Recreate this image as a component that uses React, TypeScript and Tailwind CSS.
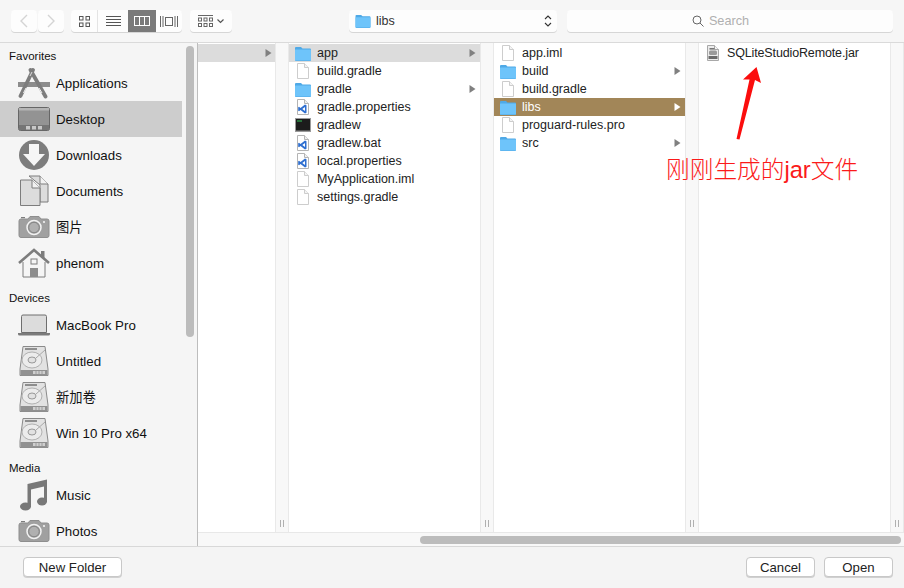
import React from "react";

const G = "#7d7d7d";

function Apps() {
  return (
    <svg width="32" height="32" viewBox="0 0 32 32">
      <rect x="0" y="15" width="32" height="5" fill="#8c8c8c" />
      <path d="M15 3 L2.5 29" stroke={G} strokeWidth="3.8" strokeLinecap="round" />
      <path d="M12.5 3 L27.5 29.5" stroke={G} strokeWidth="3.8" strokeLinecap="round" />
      <path d="M12 9 L14 5" stroke="#f5f5f5" strokeWidth="0.8" fill="none" />
      <path d="M21 21 L24 26" stroke="#f5f5f5" strokeWidth="1" />
      <path d="M8 21 L5.5 26" stroke="#f5f5f5" strokeWidth="1" />
    </svg>
  );
}
function DesktopI() {
  return (
    <svg width="32" height="32" viewBox="0 0 32 32">
      <rect x="0.5" y="4.5" width="31" height="23" rx="2" fill="#939393" stroke="#666" />
      <rect x="1" y="5" width="30" height="2.5" fill="#b5b5b5" />
      <rect x="1" y="22" width="30" height="5" fill="#757575" />
      <rect x="8" y="23" width="4" height="3.5" fill="#c8c8c8" />
      <rect x="14" y="23" width="4" height="3.5" fill="#c8c8c8" />
      <rect x="20" y="23" width="4" height="3.5" fill="#c8c8c8" />
    </svg>
  );
}
function DownloadsI() {
  return (
    <svg width="32" height="32" viewBox="0 0 32 32">
      <circle cx="16" cy="16" r="15" fill={G} />
      <path d="M11 5 H21 V15 H27 L16 27 L5 15 H11 Z" fill="#f6f6f6" />
    </svg>
  );
}
function DocsI() {
  return (
    <svg width="32" height="32" viewBox="0 0 32 32">
      <path d="M11 1 H22 L30 9 V27 H22 V10 Z" fill="#dcdcdc" stroke={G} />
      <path d="M22 1 V9 H30" fill="#f2f2f2" stroke={G} />
      <path d="M2.5 5 H14 L22 13 V30.5 H2.5 Z" fill="#dcdcdc" stroke={G} />
      <path d="M14 5 V13 H22" fill="#f2f2f2" stroke={G} />
    </svg>
  );
}
function CameraI() {
  return (
    <svg width="32" height="32" viewBox="0 0 32 32">
      <path d="M1 10 a2 2 0 0 1 2 -2 H10 L12 5.5 H21 L23 8 H29 a2 2 0 0 1 2 2 V24.5 a2 2 0 0 1 -2 2 H3 a2 2 0 0 1 -2 -2 Z" fill="#a0a0a0" stroke="#8e8e8e" />
      <rect x="3" y="6" width="4" height="1.2" fill={G} />
      <circle cx="16" cy="16.5" r="7" fill="#a0a0a0" stroke="#f2f2f2" strokeWidth="1.5" />
      <circle cx="16" cy="16.5" r="5.2" fill="#b0b0b0" stroke="#767676" strokeWidth="0.7" />
      <circle cx="26" cy="11" r="1.1" fill="#f2f2f2" />
    </svg>
  );
}
function HouseI() {
  return (
    <svg width="32" height="32" viewBox="0 0 32 32">
      <path d="M5 15 V30 H27 V15" fill="#f5f5f5" stroke={G} />
      <path d="M1 16 L16 3 L31 16" fill="none" stroke={G} strokeWidth="2.6" />
      <rect x="23" y="4" width="3.5" height="7" fill={G} />
      <rect x="13" y="12" width="6" height="5" fill="#f5f5f5" stroke={G} />
      <rect x="12" y="21" width="8" height="9" fill="#8c8c8c" />
    </svg>
  );
}
function LaptopI() {
  return (
    <svg width="32" height="32" viewBox="0 0 32 32">
      <path d="M3.5 7.5 a1.5 1.5 0 0 1 1.5 -1.5 H27 a1.5 1.5 0 0 1 1.5 1.5 V23.5 H3.5 Z" fill="#dcdcdc" stroke="#6e6e6e" />
      <path d="M0 24 H32 V25 a1.5 1.5 0 0 1 -1.5 1.5 H1.5 A1.5 1.5 0 0 1 0 25 Z" fill="#7a7a7a" />
    </svg>
  );
}
function HddI() {
  return (
    <svg width="32" height="32" viewBox="0 0 32 32">
      <path d="M5 1.5 H27 L30 24 V30.5 H2 V24 Z" fill="#e2e2e2" stroke="#8a8a8a" />
      <rect x="7" y="3" width="12" height="2" fill="#8e8e8e" />
      <ellipse cx="14" cy="15" rx="10" ry="8" fill="#ececec" stroke="#b0b0b0" />
      <ellipse cx="14" cy="15" rx="4" ry="3" fill="#e2e2e2" stroke="#999" />
      <path d="M27 5 L18 13" stroke="#a8a8a8" strokeWidth="1" />
      <rect x="2.5" y="25" width="27" height="5.5" fill="#919191" />
      <path d="M15 26 h12 v3 h-12 Z" fill="#cfcfcf" />
      <path d="M18 26 v3 M21 26 v3 M24 26 v3" stroke="#919191" strokeWidth="0.8" />
    </svg>
  );
}
function MusicI() {
  return (
    <svg width="32" height="32" viewBox="0 0 32 32">
      <path d="M9.5 5 L29 0.5 V23 H26 V7.5 L13 10.5 V28 H9.5 Z" fill="#787878" />
      <ellipse cx="7.5" cy="27.5" rx="5.5" ry="4" fill="#787878" />
      <ellipse cx="24" cy="22.5" rx="5" ry="4" fill="#787878" />
    </svg>
  );
}

function Folder({ w = 16, h = 15 }: { w?: number; h?: number }) {
  return (
    <svg width={w} height={h} viewBox="0 0 16 15">
      <path d="M0 2 a1 1 0 0 1 1 -1 H6 L7.5 2.5 H15 a1 1 0 0 1 1 1 V14 a1 1 0 0 1 -1 1 H1 a1 1 0 0 1 -1 -1 Z" fill="#4fa9e6" />
      <rect x="0" y="3.5" width="16" height="11" rx="0.5" fill="#6ec4fa" />
    </svg>
  );
}
function Doc() {
  return (
    <svg width="16" height="16" viewBox="0 0 16 16">
      <path d="M2.5 0.5 H9.5 L13.5 4.5 V15.5 H2.5 Z" fill="#fff" stroke="#cdcdcd" />
      <path d="M9.5 0.5 V4.5 H13.5" fill="#f4f4f4" stroke="#cdcdcd" />
    </svg>
  );
}
function CodeDoc() {
  return (
    <svg width="16" height="16" viewBox="0 0 16 16">
      <path d="M2.5 0.5 H9.5 L13.5 4.5 V15.5 H2.5 Z" fill="#fff" stroke="#b4b4b4" />
      <path d="M9.5 0.5 V4.5 H13.5" fill="#f0f0f0" stroke="#b4b4b4" />
      <path d="M10 5.5 L11.5 6.2 V13.8 L10 14.5 L5.5 11 L4 12.2 L3.2 11.7 V8.3 L4 7.8 L5.5 9 Z M10 8 L7.3 10 L10 12 Z" fill="#2f6fd0" />
    </svg>
  );
}
function Term() {
  return (
    <svg width="16" height="16" viewBox="0 0 16 16">
      <rect x="0.5" y="1.5" width="15" height="13" fill="#1c1c1c" stroke="#9a9a9a" />
      <rect x="2" y="3.5" width="5" height="1" fill="#35c55a" />
      <rect x="1" y="13" width="14" height="1" fill="#555" />
    </svg>
  );
}
function Jar() {
  return (
    <svg width="16" height="16" viewBox="0 0 16 16">
      <path d="M2.5 0.5 H9.5 L13.5 4.5 V15.5 H2.5 Z" fill="#ececec" stroke="#a8a8a8" />
      <path d="M9.5 0.5 V4.5 H13.5" fill="#f4f4f4" stroke="#a8a8a8" />
      <rect x="4.5" y="3" width="5" height="1.6" fill="#777" />
      <rect x="4" y="5.5" width="8" height="4.5" rx="1.5" fill="#9a9a9a" />
      <rect x="3.5" y="11" width="9" height="3" fill="#6a6a6a" />
    </svg>
  );
}

type Item = { icon: React.ReactNode; name: string };
const fav: Item[] = [
  { icon: <Apps />, name: "Applications" },
  { icon: <DesktopI />, name: "Desktop" },
  { icon: <DownloadsI />, name: "Downloads" },
  { icon: <DocsI />, name: "Documents" },
  { icon: <CameraI />, name: "图片" },
  { icon: <HouseI />, name: "phenom" },
];
const dev: Item[] = [
  { icon: <LaptopI />, name: "MacBook Pro" },
  { icon: <HddI />, name: "Untitled" },
  { icon: <HddI />, name: "新加卷" },
  { icon: <HddI />, name: "Win 10 Pro x64" },
];
const media: Item[] = [
  { icon: <MusicI />, name: "Music" },
  { icon: <CameraI />, name: "Photos" },
];

function SideRow({ item }: { item: Item }) {
  const sel = item.name === "Desktop";
  return (
    <div className={"flex h-9 w-[182px] shrink-0 items-center gap-[6px] pl-[18px] text-[13.3px] text-[#111] " + (sel ? "bg-[#cdcdcd]" : "")}>
      {item.icon}
      <span className="pt-[2px]">{item.name}</span>
    </div>
  );
}
function SideLabel({ text, h }: { text: string; h: string }) {
  return (
    <div className={"flex shrink-0 items-end pb-[3px] pl-[9px] text-[11.5px] leading-[12px] text-[#111] " + h}>{text}</div>
  );
}

function Arrow({ color }: { color: string }) {
  return (
    <svg width="7" height="8" viewBox="0 0 7 8"><path d="M0.5 0 L6.5 4 L0.5 8 Z" fill={color} /></svg>
  );
}
type F = { icon: React.ReactNode; name: string; dir?: boolean; state?: "gray" | "brown"; tight?: boolean };
const folder = <Folder />;
const col2: F[] = [
  { icon: folder, name: "app", dir: true, state: "gray" },
  { icon: <Doc />, name: "build.gradle" },
  { icon: folder, name: "gradle", dir: true },
  { icon: <CodeDoc />, name: "gradle.properties" },
  { icon: <Term />, name: "gradlew" },
  { icon: <CodeDoc />, name: "gradlew.bat" },
  { icon: <CodeDoc />, name: "local.properties" },
  { icon: <Doc />, name: "MyApplication.iml" },
  { icon: <Doc />, name: "settings.gradle" },
];
const col3: F[] = [
  { icon: <Doc />, name: "app.iml" },
  { icon: folder, name: "build", dir: true },
  { icon: <Doc />, name: "build.gradle" },
  { icon: folder, name: "libs", dir: true, state: "brown" },
  { icon: <Doc />, name: "proguard-rules.pro" },
  { icon: folder, name: "src", dir: true },
];
const col4: F[] = [{ icon: <Jar />, name: "SQLiteStudioRemote.jar", tight: true }];

function FileRow({ f }: { f: F }) {
  const bg = f.state === "gray" ? "bg-[#dcdcdc] text-[#222]" : f.state === "brown" ? "bg-[#a28658] text-white" : "text-[#222]";
  return (
    <div className={"flex h-[18px] items-center pl-[6px] pr-[4px] text-[12.5px] " + bg}>
      <span className="flex w-[16px] shrink-0 items-center justify-center">{f.icon}</span>
      <span className={"ml-[6px] flex-1 truncate " + (f.tight ? "tracking-[-0.14px]" : "")}>{f.name}</span>
      {f.dir && <Arrow color={f.state === "brown" ? "#fff" : "#808080"} />}
    </div>
  );
}
function Gutter() {
  return (
    <div className="flex w-[14px] shrink-0 items-end justify-center gap-[2px] border-x border-[#e9e9e9] bg-[#f8f8f8] pb-[5px]">
      <span className="h-[7px] w-px bg-[#b0b0b0]" />
      <span className="h-[7px] w-px bg-[#b0b0b0]" />
    </div>
  );
}
function Column({ items }: { items: F[] }) {
  return (
    <>
      <div className="w-[191px] shrink-0 pt-px">
        {items.map((f) => <FileRow key={f.name} f={f} />)}
      </div>
      <Gutter />
    </>
  );
}

const tbtn = "flex h-[22px] items-center justify-center bg-[#fdfdfd] shadow-[0_1px_0_#d6d6d6]";
const btn = "flex h-5 items-center justify-center rounded-[4px] border border-[#c8c8c8] bg-white pt-px text-[13.2px] text-[#222] shadow-[0_1px_0_#d0d0d0]";

export default function App() {
  return (
    <div className="relative flex h-[588px] w-[904px] flex-col overflow-hidden bg-[#f6f6f6] font-['Liberation_Sans','Noto_Sans_CJK_SC',sans-serif]">
      {/* Toolbar */}
      <div className="flex h-[43px] shrink-0 items-start border-b border-[#dadada] pl-[11px] pt-[10px]">
        <div className={tbtn + " w-[26px] rounded-[4px]"}>
          <svg width="10" height="14" viewBox="0 0 10 14"><path d="M8 1 L2 7 L8 13" fill="none" stroke="#d4d4d4" strokeWidth="1.4" /></svg>
        </div>
        <div className={tbtn + " ml-px w-[26px] rounded-[4px]"}>
          <svg width="10" height="14" viewBox="0 0 10 14"><path d="M2 1 L8 7 L2 13" fill="none" stroke="#d4d4d4" strokeWidth="1.4" /></svg>
        </div>
        <div className={tbtn + " ml-[7px] w-[111px] overflow-hidden rounded-[4px] !justify-start"}>
          <div className="flex h-full w-[27px] items-center justify-center border-r border-[#e4e4e4]">
            <svg width="11" height="11" viewBox="0 0 11 11" fill="none" stroke="#555"><rect x="0.5" y="0.5" width="3.5" height="3.5" /><rect x="7" y="0.5" width="3.5" height="3.5" /><rect x="0.5" y="7" width="3.5" height="3.5" /><rect x="7" y="7" width="3.5" height="3.5" /></svg>
          </div>
          <div className="flex h-full w-[30px] items-center justify-center">
            <svg width="15" height="11" viewBox="0 0 15 11" stroke="#555"><path d="M0 0.5 H15 M0 3.5 H15 M0 6.5 H15 M0 9.5 H15" /></svg>
          </div>
          <div className="flex h-full w-[28px] items-center justify-center bg-[#7a7a7a]">
            <svg width="16" height="10" viewBox="0 0 16 10" fill="none" stroke="#fff"><rect x="0.5" y="0.5" width="15" height="9" /><path d="M5.5 0 V10 M10.5 0 V10" /></svg>
          </div>
          <div className="flex h-full w-[26px] items-center justify-center">
            <svg width="18" height="11" viewBox="0 0 18 11" fill="none" stroke="#666"><rect x="5.5" y="1.5" width="7" height="8" /><path d="M0.5 0 V11 M3 0 V11 M15 0 V11 M17.5 0 V11" /></svg>
          </div>
        </div>
        <div className={tbtn + " ml-[8px] w-[42px] gap-[4px] rounded-[4px]"}>
          <svg width="15" height="12" viewBox="0 0 15 12" fill="none" stroke="#666"><path d="M0 0.5 H15" /><rect x="0.5" y="3" width="3" height="3" /><rect x="6" y="3" width="3" height="3" /><rect x="11.5" y="3" width="3" height="3" /><rect x="0.5" y="8.5" width="3" height="3" /><rect x="6" y="8.5" width="3" height="3" /><rect x="11.5" y="8.5" width="3" height="3" /></svg>
          <svg width="7" height="5" viewBox="0 0 7 5" fill="none" stroke="#555" strokeWidth="1.2"><path d="M0.5 0.5 L3.5 3.5 L6.5 0.5" /></svg>
        </div>
        <div className={tbtn + " ml-[117px] w-[208px] !justify-start rounded-[4px] pl-[6px] pr-[5px]"}>
          <Folder w={16} h={14} />
          <span className="ml-[5px] flex-1 text-[12.5px] text-[#333]">libs</span>
          <svg width="8" height="14" viewBox="0 0 8 14" fill="none" stroke="#333" strokeWidth="1.1"><path d="M1 5 L4 2 L7 5 M1 9 L4 12 L7 9" /></svg>
        </div>
        <div className={tbtn + " ml-[10px] h-[21px] w-[326px] gap-[5px] rounded-[4px] pr-[19px]"}>
          <svg width="12" height="12" viewBox="0 0 12 12" fill="none" stroke="#666"><circle cx="5" cy="5" r="4" /><path d="M8 8 L11.5 11.5" /></svg>
          <span className="pt-px text-[12.7px] text-[#b0b0b0]">Search</span>
        </div>
      </div>

      {/* Middle */}
      <div className="flex min-h-0 flex-1 border-b border-[#d8d8d8]">
        <div className="relative w-[198px] shrink-0 overflow-hidden border-r border-[#bdbdbd] bg-[#f5f5f5]">
          <div className="flex h-full flex-col">
            <SideLabel text="Favorites" h="h-[22px]" />
            {fav.map((i) => <SideRow key={i.name} item={i} />)}
            <SideLabel text="Devices" h="h-[26px]" />
            {dev.map((i) => <SideRow key={i.name} item={i} />)}
            <SideLabel text="Media" h="h-[26px]" />
            {media.map((i) => <SideRow key={i.name} item={i} />)}
          </div>
          <div className="absolute left-[186px] top-[3px] h-[291px] w-[8px] rounded-full bg-[#bcbcbc]" />
        </div>
        <div className="flex min-w-0 flex-1 flex-col bg-white">
          <div className="flex min-h-0 flex-1">
            <div className="w-[77px] shrink-0 pt-px">
              <div className="flex h-[18px] items-center justify-end bg-[#dcdcdc] pr-[3px]"><Arrow color="#808080" /></div>
            </div>
            <Gutter />
            <Column items={col2} />
            <Column items={col3} />
            <Column items={col4} />
          </div>
          <div className="flex h-[14px] shrink-0 items-center border-t border-[#e8e8e8] bg-[#f8f8f8] pl-[222px] pr-[3px]">
            <div className="h-[8px] w-full rounded-full bg-[#bcbcbc]" />
          </div>
        </div>
      </div>

      {/* Bottom */}
      <div className="flex h-[41px] shrink-0 items-start bg-[#f4f4f4] pl-[23px] pr-[11px] pt-[10px]">
        <div className={btn + " w-[99px]"}>New Folder</div>
        <div className={btn + " ml-auto w-[69px]"}>Cancel</div>
        <div className={btn + " ml-[9px] w-[69px]"}>Open</div>
      </div>

      {/* Annotation */}
      <svg className="absolute left-[730px] top-[60px]" width="40" height="85" viewBox="730 60 40 85">
        <path d="M756.5 67 L761 83 L755 80 L739.5 139.5 L736.5 139 L749.5 79.5 L743 79.5 Z" fill="#fb0d0d" />
      </svg>
      <div className="absolute left-[666px] top-[155px] whitespace-nowrap text-[23.7px] font-light leading-[30px] text-[#fb1a1a]">刚刚生成的jar文件</div>
    </div>
  );
}
